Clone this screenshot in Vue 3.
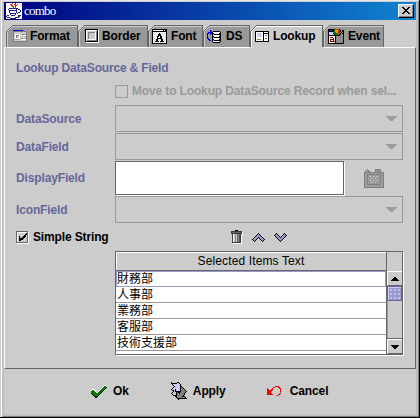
<script setup>
import { h } from 'vue'

const palette = {
  k: '#000000', w: '#ffffff', r: '#d01818', R: '#ff0000', b: '#18187c', B: '#0000ff', n: '#3a3a3a',
  g: '#808080', l: '#cccccc', s: '#9c9c9c', d: '#666666', p: '#9999cc', v: '#ccccff', G: '#087b08',
  y: '#e8a000', o: '#b06000', t: '#008000', q: '#d5e2d5', D: '#555555', e: '#850000'
}

const icons = {
  java: [
    'wwwwwwrwwrwwwwww', 'wwwwrrwwrrwrwwww', 'wwwwwrrwwrrwwwww', 'wwwwwwrrwrwwwwww',
    'wwwwwwwrwrwwwwww', 'wwwbbbbbbbbbwwww', 'wwbwwwwwwwbwbbww', 'wwwbbbbbbbbwwwbw',
    'wwwbwwwwwwbwwwbw', 'wwwbwwwwwwbwbbww', 'wwwwbbbbbbwbwwww', 'wwwwbwwwwbwwwwww',
    'wbbwwbbbbwwwbbbw', 'bwwwwwwwwwwwbbww', 'wbbbwwwwwbbbbwww', 'wwwwbbbbbbwwwwww'
  ],
  format: [
    'BBBBBBBBBBgglg', 'gggggggggggggg', 'gllllllllllllg', 'gllllllllllllg', 'glwwwwwllgggsg',
    'glwgggwllwwwwg', 'glwgllwlllllsg', 'glwgllwllllllg', 'glwwwwwlggllsg', 'glssssslwwwwwg',
    'gllllllllllllg', 'gggggggggggggg'
  ],
  border: [
    'kkkkkkkkkkkkk.', 'kwwwwwwwwwwwkw', 'kwlllllllllgkw', 'kwlgggggggwgkw', 'kwlgllllllwgkw',
    'kwlgllllllwgkw', 'kwlgllllllwgkw', 'kwlgllllllwgkw', 'kwlgllllllwgkw', 'kwlgllllllwgkw',
    'kwlwwwwwwwwgkw', 'kwggggggggggkw', 'kkkkkkkkkkkkkw', '.wwwwwwwwwwwww'
  ],
  font: [
    'kkkkkkkkkkkkkkk', 'kwwwwwwwwwwkwkk', 'kkkkkkkkkkkkkkk', 'kwqwqwqwqwqwqwk', 'kqwqwqwkqwqwqqk',
    'kwqwqwkkkwqwqwk', 'kqwqwqkkkqwqwqk', 'kwqwqkkwkkqwqwk', 'kqwqwkqwkkwqwqk', 'kwqwqkkkkkqwqwk',
    'kqwqkkqwqkkqwqk', 'kwqwkkwqwkkwqwk', 'kqwkkkkwkkkkwqk', 'kwqwqwqwqwqwqwk', 'kkkkkkkkkkkkkkk'
  ],
  ds: [
    '...B............', '...BB.kkkkkkk...', '.BBBBkwwwwwwwk..', 'BB.BBkkwwwwwkk..', 'B..B.kgkkkkkkk..',
    'B....kwlwwwwsk..', 'B....kkwwwwwkk..', 'B....kgkkkkkkk..', 'BB...kwlwwwwsk..', '.BB..kkwwwwwkk..',
    '..BB.kgkkkkkkk..', '.....kwlwwwwsk..', '......kkkkkkk...'
  ],
  lookup: [
    'kkkkkkkkkkkkkk', 'kwwwwwwwkwwwwk', 'kwvvvvvwkkkkkk', 'kwvvvvvwkwwwwk', 'kwvvvvvwkwggwk',
    'kwvvvvvwkwwwwk', 'kwwwwwwwkwwwwk', 'kwwwwwwwkwggwk', 'kwggggwwkwwwwk', 'kwwwwwwwkwwwwk',
    'kkkkkkkkkkkkkk'
  ],
  event: [
    'kkkkkkkooook....', 'kBBBkktyyyrok.kk', 'kkkkkktyyyrrkskk', 'kvvvvottyyrrokgk', 'kvvvvkttttookgkk',
    'kvvvvvkttookksgk', 'kkkkkkkkkkkksgsk', 'kwwwwwwkgsgsgsgk', 'kweeewwksgsgsgsk', 'kwwwwewkgsgsgsgk',
    'kweeeewksgsgsgsk', 'kwewwewkgsgsgsgk', 'kweeeeeksgsgsgsk', 'kwwwwwwkgsgsgsgk', 'kkkkkkkkkkkkkkkk'
  ],
  chest: [
    '...g.......gggggg...', '..gsg......gsgssg...', '.gssgg.....gsgssg...', 'gggggggggggggggggggg',
    'gssssssssssssssssssg', 'gssggggggggggggggssg', 'gssgssssssssssssgssg', 'gssgsslsslsslsssgssg',
    'gssgssssssssssssgssg', 'gssgssslssslssssgssg', 'gssgssssssssssssgssg', 'gssgsslsslsslsssgssg',
    'gssgssssssssssssgssg', 'gssgssslssslssssgssg', 'gssgssssssssssssgssg', 'gssggggggggggggggssg',
    'gssssssssssssssssssg', 'gssssssssssssssssssg', 'gggggggggggggggggggg'
  ],
  trash: [
    '....kkk.....', 'nnnnnnnnnnn.', 'ndddddddddnw', 'nnnnnnnnnnnw', '.nwlgldgDn.w', '.nwlgldgDnw.',
    '.nwlgldgDnw.', '.nwlgldgDnw.', '.nwlgldgDnw.', '.nwlgldgDnw.', '.nwlgldgDnw.', '.nwlgldgDnw.',
    '.nnnnnnnnnw.', '..wwwwwwwww.'
  ],
  up: [
    '......k......', '.....kpk.....', '....kpppk....', '...kpppppk...', '..kpppkpppk..', '.kpppk.kpppk.',
    'kpppk...kpppk', '.kpk.....kpk.', '..k.......k..'
  ],
  ok: [
    '.............ww..', '............wGGw.', '...........wGGGk.', '..........wGGGk..', '.www.....wGGGk...',
    'wGGw....wGGGk....', 'GGGGw..wGGGk.....', 'GGGGGwwGGGk......', 'kGGGGGGGGk.......', '.kGGGGGGk........',
    '..kGGGGk.........', '...kGGk..........', '....kk...........'
  ],
  apply: [
    'k.....kk........', 'kkkkkkvvk.......', '.kvvvvvvvk......', '..kvvvvvvk......', '...kvvvvvkk.....',
    '..kvvvvvvkgk....', '.kvvvvvvvkggk...', 'kvvvkvvvvkgggk..', '.kk.kvvvvkggggk.', '..k.kkkkkkgggggk',
    '.k...kgkkgggggk.', 'k....kggkggggk..', '.k...kgggggggk..', '..kkkkggggggk...', '....kkgggggkkk..',
    '.....kggggggggk.', '......kkkkkkkkkk', '.......k........'
  ],
  cancel: [
    '........RRRR..', '......RR...RR.', 'R....R......RR', 'RR..RR.......R', 'RRRRRg.......R', 'RRRRg........R',
    'RRRR.........g', 'RRRRR.......gR', 'RRRRRR.....gR.', '.........ggR..'
  ],
  tick: [
    '........k', '.......kk', '......kk.', '.k...kkk.', '.k..kkk..', '.kkkkk...', '.kkkk....', '.kk......'
  ],
  arrowDown: ['sssssssssss', '.sssssssss.', '..sssssss..', '...sssss...', '....sss....'],
  arrowSmall: ['kkkkkkkk', '.kkkkkk.', '..kkkk..', '...kk...'],
  close: ['kk....kk', '.kk..kk.', '..kkkk..', '...kk...', '..kkkk..', '.kk..kk.', 'kk....kk']
}
icons.down = [...icons.up].reverse()
icons.arrowUp = [...icons.arrowSmall].reverse()

const PixelIcon = ({ name }) => {
  const rows = icons[name]
  const width = Math.max(...rows.map((row) => row.length))
  const cells = []
  rows.forEach((row, y) => {
    for (let x = 0; x < row.length;) {
      let end = x + 1
      while (row[end] === row[x]) end++
      if (row[x] !== '.') cells.push(h('rect', { x, y, width: end - x, height: 1, fill: palette[row[x]] }))
      x = end
    }
  })
  return h('svg', {
    width, height: rows.length, viewBox: `0 0 ${width} ${rows.length}`,
    'shape-rendering': 'crispEdges', 'aria-hidden': true
  }, cells)
}
PixelIcon.props = ['name']

const tabs = [
  { label: 'Format', icon: 'format', width: 72 },
  { label: 'Border', icon: 'border', width: 70 },
  { label: 'Font', icon: 'font', width: 55 },
  { label: 'DS', icon: 'ds', width: 47 },
  { label: 'Lookup', icon: 'lookup', width: 73, active: true },
  { label: 'Event', icon: 'event', width: 61 }
]
const items = ['財務部', '人事部', '業務部', '客服部', '技術支援部']
</script>

<template>
  <div class="window">
    <header class="title">
      <PixelIcon name="java" />
      <span class="title-text">combo</span>
      <button class="close"><PixelIcon name="close" /></button>
    </header>

    <nav class="tabs">
      <div v-for="t in tabs" :key="t.label" class="tab" :class="[t.icon, { active: t.active }]" :style="{ width: t.width + 'px' }">
        <svg class="shape" :width="t.width" height="23" shape-rendering="crispEdges">
          <path :d="`M0 ${t.active ? 23 : 22}V6L6 0H${t.width}V${t.active ? 23 : 22}Z`" :fill="t.active ? '#ccc' : '#999'" />
          <path :d="`M1.5 ${t.active ? 23 : 22}V6.5L6.5 1.5H${t.width - 1}`" fill="none" :stroke="t.active ? '#fff' : '#ccc'" />
          <path :d="`M0.5 22V6.5L6.5 .5H${t.width - .5}V22`" fill="none" stroke="#666" />
        </svg>
        <PixelIcon :name="t.icon" />
        <span>{{ t.label }}</span>
      </div>
    </nav>

    <main class="panel">
      <h1>Lookup DataSource &amp; Field</h1>
      <div class="row move">
        <span class="box"></span><span>Move to Lookup DataSource Record when sel...</span>
      </div>
      <div class="row source"><label>DataSource</label><div class="combo"><PixelIcon name="arrowDown" /></div></div>
      <div class="row data"><label>DataField</label><div class="combo"><PixelIcon name="arrowDown" /></div></div>
      <div class="row display"><label>DisplayField</label><div class="field"></div><PixelIcon name="chest" /></div>
      <div class="row icon-field"><label>IconField</label><div class="combo"><PixelIcon name="arrowDown" /></div></div>
      <div class="row simple">
        <span class="check"><PixelIcon name="tick" /></span><span class="simple-text">Simple String</span>
        <div class="tools"><PixelIcon name="trash" /><PixelIcon name="up" /><PixelIcon name="down" /></div>
      </div>
      <div class="table">
        <div class="head"><span>Selected Items Text</span></div>
        <div class="body">
          <div class="list">
            <div v-for="(item, i) in items" :key="item" class="item" :class="{ focus: i === 0 }">{{ item }}</div>
          </div>
          <div class="scroll">
            <div class="arrow"><PixelIcon name="arrowUp" /></div>
            <div class="thumb"></div>
            <div class="track"></div>
            <div class="arrow"><PixelIcon name="arrowSmall" /></div>
          </div>
        </div>
      </div>
    </main>

    <footer class="actions">
      <div class="action"><PixelIcon name="ok" /><span>Ok</span></div>
      <div class="action apply"><PixelIcon name="apply" /><span>Apply</span></div>
      <div class="action cancel"><PixelIcon name="cancel" /><span>Cancel</span></div>
    </footer>
  </div>
</template>

<style>
body { margin: 0; background: #ccc; }
</style>

<style scoped>
* { box-sizing: border-box; }
svg { display: block; flex: none; }
.window {
  display: flex; flex-direction: column; width: 420px; height: 418px; padding: 1px 2px 1px 3px;
  border-right: 1px solid #000; border-bottom: 1px solid #000; background: #ccc;
  box-shadow: inset 1px 0 #ccc, inset 2px 0 #fff, inset 0 1px #e8e8e8, inset -1px -1px #808080, inset 4px 0 #c0c0c0, inset -3px -3px #c0c0c0;
  font: bold 12px/14px "Liberation Sans", "Noto Sans CJK TC", sans-serif; color: #000;
}
.title {
  display: flex; align-items: center; height: 18px; margin: 1px 1px 0; padding: 0 2px;
  background: linear-gradient(90deg, #000080, #1084d0);
}
.title-text { flex: 1; padding-left: 2px; color: #fff; font: 13px/18px "Liberation Serif", serif; letter-spacing: -.8px; }
.close {
  display: flex; align-items: center; justify-content: center; width: 16px; height: 14px; padding: 0 1px 1px 0;
  border: 1px solid; border-color: #fff #000 #000 #fff; background: #ccc; box-shadow: inset -1px -1px #808080;
}
.tabs { display: flex; height: 27px; padding: 5px 0 0 3px; }
.tab { position: relative; display: flex; align-items: center; height: 22px; padding-left: 7px; letter-spacing: -.15px; }
.tab > .shape { position: absolute; top: 0; left: 0; }
.tab > :not(.shape) { position: relative; }
.tab span { padding-left: 4px; }
.format > span { padding-left: 3px; }
.border > span { padding-left: 3px; }
.font { padding-left: 4px; }
.ds { padding-left: 4px; }
.ds > span { padding-left: 3px; }
.lookup, .event { padding-left: 5px; }
.active { z-index: 1; }
.panel {
  display: flex; flex-direction: column; width: 412px; height: 322px; margin-left: 1px; padding: 13px 0 0 11px;
  border: 1px solid; border-color: #fff #666 #666 #fff; background: #ccc;
}
h1 { margin: 0; font: inherit; color: #669; letter-spacing: -.17px; }
.row { display: flex; align-items: center; color: #669; letter-spacing: -.14px; }
.row label { width: 99px; height: 14px; }
.move { height: 14px; margin: 9px 0 0 99px; color: #999; }
.box { width: 13px; height: 13px; margin-right: 4px; border: 1px solid #999; }
.source { height: 27px; margin-top: 7px; }
.data { height: 27px; margin-top: 1px; }
.combo { display: flex; align-items: center; justify-content: flex-end; width: 288px; height: 27px; padding-right: 5px; border: 1px solid #999; }
.display { height: 34px; margin-top: 1px; }
.field { width: 229px; height: 34px; margin-right: 20px; border: 1px solid #666; background: #fff; box-shadow: 1px 1px #fff; }
.icon-field { height: 27px; margin-top: 1px; }
.simple { height: 14px; margin-top: 7px; color: #000; }
.check { display: flex; align-items: center; justify-content: center; width: 12px; height: 12px; border: 1px solid #666; box-shadow: 1px 1px #fff, inset 1px 1px #fff; }
.simple-text { width: 188px; padding-left: 5px; }
.tools { display: flex; align-items: center; gap: 9px; margin-left: 15px; }
.table { width: 288px; height: 104px; margin: 7px 0 0 99px; border: 1px solid #666; box-shadow: 1px 1px #fff; }
.head { display: flex; height: 19px; font-weight: normal; }
.head span { width: 271px; height: 19px; padding-top: 2px; border: solid #666; border-width: 0 1px 1px 0; text-align: center; box-shadow: inset 1px 1px #fff; letter-spacing: .12px; }
.body { display: flex; height: 83px; }
.list { width: 270px; background: #fff; }
.item { height: 16px; padding-left: 1px; border-bottom: 1px solid #999; font: 12px/14px "Noto Sans CJK TC", sans-serif; }
.focus { line-height: 12px; padding-left: 0; border: 1px solid #99c; }
.scroll { display: flex; flex-direction: column; width: 16px; border-left: 1px solid #666; }
.arrow { display: flex; flex: none; align-items: center; justify-content: center; height: 15px; border: solid; border-width: 1px 0 1px 1px; border-color: #fff #fff #666 #fff; }
.thumb {
  height: 15px; border: 1px solid #669; box-shadow: inset 1px 1px #ccf;
  background: radial-gradient(circle at 1px 1px, #ccf .6px, transparent 1px) 2px 2px / 4px 4px, #99c;
}
.track { flex: 1; border-left: 1px solid #999; border-bottom: 1px solid #666; }
.actions { display: flex; align-items: center; height: 44px; padding-left: 88px; letter-spacing: -.1px; }
.action { display: flex; align-items: center; gap: 5px; height: 20px; }
.apply { margin-left: 42px; gap: 6px; }
.cancel { margin-left: 41px; gap: 9px; }
</style>
